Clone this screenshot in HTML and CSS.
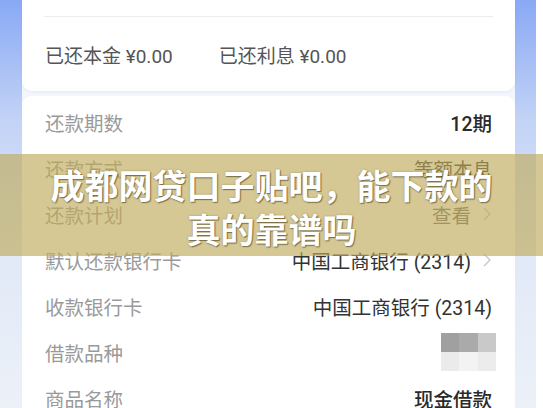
FILE: index.html
```html
<!DOCTYPE html>
<html lang="zh-CN">
<head>
<meta charset="utf-8">
<title>成都网贷口子贴吧，能下款的真的靠谱吗</title>
<link rel="stylesheet" href="styles.css">
</head>
<body>
<div class="page">
  <div class="wrap">
    <section class="card summary">
      <div class="divider"></div>
      <div class="paid">
        <span>已还本金 ¥0.00</span>
        <span>已还利息 ¥0.00</span>
      </div>
    </section>
    <section class="card detail">
      <div class="row"><span class="label">还款期数</span><span class="value strong">12期</span></div>
      <div class="row"><span class="label">还款方式</span><span class="value">等额本息</span></div>
      <div class="row"><span class="label">还款计划</span><span class="value muted">查看<svg class="chev" viewBox="0 0 8 14" width="8" height="14"><polyline points="1,1 7,7 1,13" fill="none" stroke="#c4c4c4" stroke-width="1.3"/></svg></span></div>
      <div class="row"><span class="label">默认还款银行卡</span><span class="value">中国工商银行 (2314)<svg class="chev" viewBox="0 0 8 14" width="8" height="14"><polyline points="1,1 7,7 1,13" fill="none" stroke="#c4c4c4" stroke-width="1.3"/></svg></span></div>
      <div class="row"><span class="label">收款银行卡</span><span class="value">中国工商银行 (2314)</span></div>
      <div class="row"><span class="label">借款品种</span>
        <span class="mosaic"><i class="m1"></i><i class="m2"></i><i class="m3"></i><i class="m4"></i><i class="m5"></i><i class="m6"></i></span>
      </div>
      <div class="row"><span class="label">商品名称</span><span class="value strong">现金借款</span></div>
    </section>
  </div>
</div>
<div class="banner">
  <h1 class="title">成都网贷口子贴吧，能下款的<br>真的靠谱吗</h1>
</div>
</body>
</html>
```

FILE: styles.css
```css
html, body {
  margin: 0;
  padding: 0;
  background: #ffffff;
  overflow: hidden;
}
body {
  width: 543px;
  height: 408px;
  font-family: Roboto, "Noto Sans CJK SC", sans-serif;
  position: relative;
}
.page {
  width: 536px;
  height: 408px;
  box-sizing: border-box;
  padding: 0 21px 0 22px;
  background: linear-gradient(180deg, #89a9f5 0px, #c3d3f6 120px, #e2e9f7 260px, #ecf1f8 408px);
}
.wrap {
  height: 408px;
  background: #f3f6fc;
  display: flex;
  flex-direction: column;
  gap: 5px;
}
.card {
  background: #ffffff;
}
.summary {
  padding-top: 16px;
  border-radius: 0 0 10px 10px;
  box-shadow: 0 1px 3px rgba(120, 140, 190, 0.12);
}
.divider {
  height: 1px;
  margin: 0 22px 0 22px;
  background: #ececf0;
}
.paid {
  height: 74px;
  display: flex;
  align-items: center;
  gap: 46px;
  padding: 0 23px 0 23px;
  font-size: 19px;
  color: #555555;
}
.detail {
  border-radius: 10px 10px 0 0;
  padding: 3px 23px 0 23px;
}
.row {
  height: 46px;
  display: flex;
  align-items: center;
  justify-content: space-between;
}
.label {
  font-size: 19.5px;
  color: #9a9a9a;
}
.value {
  font-size: 19.5px;
  color: #333333;
  display: flex;
  align-items: center;
}
.value.strong {
  color: #2a2a2a;
  font-weight: 500;
}
.value.muted {
  color: #666666;
}
.chev {
  margin-left: 12px;
  margin-right: 1px;
}
.mosaic {
  display: grid;
  grid-template-columns: 18px 19px 18px;
  grid-template-rows: 19px 19px;
  margin-right: -4px;
  filter: blur(0.6px);
}
.mosaic i { display: block; }
.m1 { background: #a0a0a0; }
.m2 { background: #aaaaaa; }
.m3 { background: #c9c9c9; }
.m4 { background: #ebebeb; }
.m5 { background: #f3f3f3; }
.m6 { background: #ececec; }
.banner {
  position: absolute;
  left: 0;
  top: 154px;
  width: 543px;
  height: 102px;
  box-sizing: border-box;
  padding-top: 9px;
  background: rgba(190, 170, 90, 0.65);
}
.title {
  margin: 0;
  text-align: center;
  font-family: "Noto Sans CJK SC", sans-serif;
  font-size: 34px;
  line-height: 44px;
  font-weight: 700;
  color: #ffffff;
  text-shadow: 1px 1px 1px rgba(60, 50, 20, 0.55), 0 0 2px rgba(60, 50, 20, 0.35);
}
```
